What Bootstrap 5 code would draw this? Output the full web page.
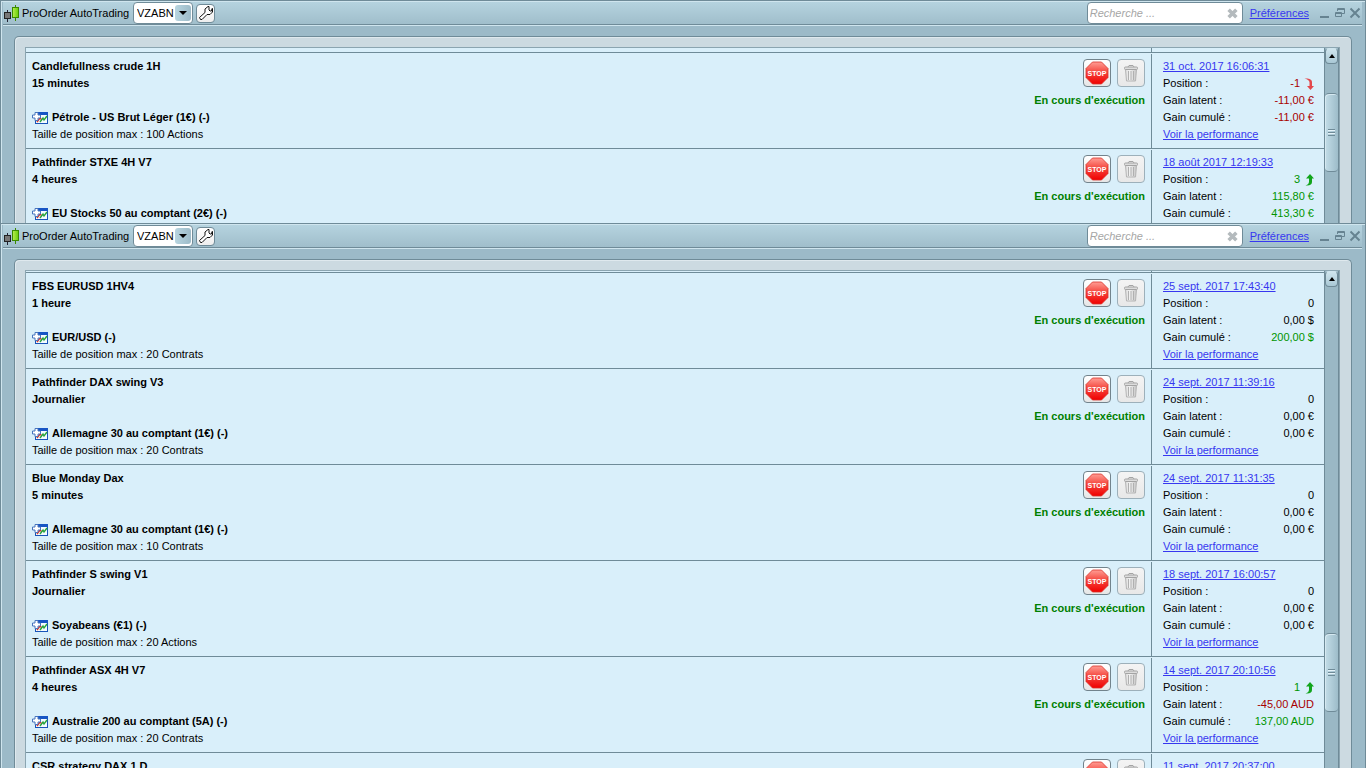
<!DOCTYPE html>
<html lang="fr">
<head>
<meta charset="utf-8">
<meta name="viewport" content="width=device-width, initial-scale=1">
<title>ProOrder AutoTrading</title>
<link href="https://cdn.jsdelivr.net/npm/bootstrap@5.3.0/dist/css/bootstrap.min.css" rel="stylesheet">
<style>
:root { --edge: #6f8b98; --chrome: #9cbac8; --panel: #ccdae1; --sheet: #d9effa; --blue: #3737f0; }
body { font: 11px/17px "Liberation Sans", Arial, sans-serif; color: #000; background: var(--chrome); }
a { color: var(--blue); }
.desktop { height: 100vh; display: grid; grid-template-rows: 223fr 545fr; }
.app-window { min-height: 0; background: var(--chrome); border: 1px solid var(--edge); border-bottom: 0; box-shadow: inset 1px 1px #cfe5ee; }
.title-bar { height: 24px; margin: 0 3px 0 2px; padding-top: 1px; background: linear-gradient(#cfe5ee 1px, #b5d3df 1px, #a0becb); border-bottom: 1px solid var(--edge); box-shadow: 0 1px #cfe5ee; }
.app-icon { width: 16px; height: 18px; margin: 0 2px 0 1px; }
.app-name { width: 111px; }
.field-box { height: 22px; background: #fff; border: 1px solid var(--edge); border-radius: 4px; }
.account { width: 60px; }
.account select { appearance: none; width: 100%; height: 20px; padding: 0 0 0 3px; border: 0; background: transparent; color: #000; font-size: 11px; }
.account span { top: 2px; right: 1px; width: 16px; height: 16px; border-radius: 3px; background: linear-gradient(90deg, #b8d5e0, #9dbbc8); }
.tool { width: 19px; height: 19px; background: linear-gradient(#fff, #eee); border: 1px solid var(--edge); border-radius: 4px; margin-left: 3px; }
.search { width: 156px; }
.search input { border: 0; background: transparent; padding: 0 0 0 2px; font-style: italic; font-size: 11px; color: #333; }
.search input::placeholder { color: #a6a6a6; opacity: 1; }
.prefs { margin: 0 8px 0 7px; }
.win-btn { width: 15px; height: 16px; color: #668391; }
.outer-panel { margin: 11px 13px 0; padding: 10px 11px 0 10px; background: var(--panel); border: 1px solid var(--edge); border-bottom: 0; border-radius: 5px 5px 0 0; box-shadow: inset 1px 1px #dfe9ee; }
.sheet { background: var(--sheet); border: 1px solid #8ba5b1; border-bottom: 0; }
.lead-4 { padding-top: 4px; }
.lead-1 { padding-top: 1px; }
.system { border-top: 1px solid var(--edge); }
.main-cell { padding: 5px 6px; }
.stats { width: 173px; margin-top: 1px; padding: 4px 10px 5px 11px; border-left: 1px solid var(--edge); }
.stub { width: 173px; border-left: 1px solid var(--edge); }
.lead-4 .stub { height: 4px; margin-top: -4px; }
.lead-1 .stub { height: 1px; margin-top: -1px; }
.instrument svg { width: 16px; height: 14px; margin-right: 4px; }
.actions { gap: 6px; margin: 1px 0 5px; }
.act { width: 28px; height: 28px; border: 1px solid #72838c; border-radius: 4px; background: linear-gradient(#fff, #f4f4f4 50%, #e6e6e6); }
.act:disabled { border-color: #9db0ba; background: linear-gradient(#f4f4f4, #e8e8e8); }
.running { color: #008000; }
.up { color: #009500; }
.down { color: #a80000; }
.trend { width: 10px; height: 12px; margin-left: 4px; }
.scroller { width: 15px; background: #9ab8c5; border-left: 1px solid var(--edge); border-right: 1px solid var(--edge); }
.scroll-up { height: 16px; border: 1px solid var(--edge); border-top-color: #cfe5ee; border-radius: 4px; background: linear-gradient(#cfe5ee, #a9c8d5); }
.thumb { height: 79px; border: 1px solid var(--edge); border-width: 1px 0; border-radius: 4px; background: linear-gradient(90deg, #c3dde8, #9dbcc9); box-shadow: inset 1px 1px #d6e9f1; }
</style>
</head>
<body class="overflow-hidden">

<svg class="position-absolute" width="0" height="0" aria-hidden="true">
  <defs>
    <linearGradient id="redFill" x1="0" y1="0" x2="0" y2="1"><stop offset="0" stop-color="#ff9d94"/><stop offset=".45" stop-color="#f54840"/><stop offset="1" stop-color="#f00000"/></linearGradient>
    <linearGradient id="greenFill" x1="0" x2="1"><stop offset="0" stop-color="#b9ee50"/><stop offset="1" stop-color="#67cc08"/></linearGradient>
    <linearGradient id="binFill" x1="0" x2="1"><stop offset="0" stop-color="#ddd"/><stop offset=".4" stop-color="#f2f2f2"/><stop offset="1" stop-color="#c4c4c4"/></linearGradient>
  </defs>
  <symbol id="candles" viewBox="0 0 16 18"><path d="M3.500 6v12" stroke="#223"/><path d="M11.500 1v16" stroke="#3b8a00"/><rect x=".5" y="8.500" width="6" height="6" fill="#777" stroke="#222"/><rect x="8.500" y="3.500" width="6" height="10" fill="url(#greenFill)" stroke="#3b8a00"/></symbol>
  <symbol id="wrench" viewBox="0 0 16 16"><path d="M1.500 12.500 7 7.500V4L10 1.500h1V5l1 1h1.500l.5-2.500h.5V7L12 9.500H9L4 14.500H2.500z" fill="#fff" stroke="#111" stroke-linejoin="round"/></symbol>
  <symbol id="clear" viewBox="0 0 10 10"><path d="M1.500 1.500l7 7M8.500 1.500l-7 7" stroke="#b4babd" stroke-width="3.200"/></symbol>
  <symbol id="caret" viewBox="0 0 8 4"><path d="M0 0h8L4 4z"/></symbol>
  <symbol id="caretUp" viewBox="0 0 8 4"><path d="M1 4h6L4 0z"/></symbol>
  <symbol id="minimize" viewBox="0 0 12 12"><path d="M1 10h9" stroke="currentColor" stroke-width="2"/></symbol>
  <symbol id="restore" viewBox="0 0 12 12"><path d="M3.500 4V1.500h7v5H8M3 2.500h8" fill="none" stroke="currentColor"/><path d="M1.500 5.500h6v4h-6zM1 6.500h7" fill="none" stroke="currentColor"/></symbol>
  <symbol id="close" viewBox="0 0 12 12"><path d="M1.500 1.500l9 9M10.500 1.500l-9 9" stroke="currentColor" stroke-width="2"/></symbol>
  <symbol id="stop" viewBox="0 0 24 24"><path d="M7.500 1h9L23 7.500v9L16.500 23h-9L1 16.500v-9z" fill="url(#redFill)" stroke="#d9332c" stroke-width=".8"/><text x="12" y="15" text-anchor="middle" font-family="Liberation Sans, sans-serif" font-size="7" font-weight="700" fill="#fff">STOP</text></symbol>
  <symbol id="bin" viewBox="0 0 16 18"><path d="M2.500 5.500h11L12.500 17h-9z" fill="url(#binFill)" stroke="#b4b4b4"/><path d="M5.500 7v9M8 7v9M10.500 7v9" stroke="#b0b0b0"/><rect x="1.500" y="3" width="13" height="2.500" rx="1" fill="#ddd" stroke="#a4a4a4"/><path d="M5 3 6 1.500h4L11 3" fill="none" stroke="#a4a4a4"/></symbol>
  <symbol id="chart" viewBox="0 0 16 14"><rect x="3.500" y="1.500" width="12" height="11" fill="#f5fbff" stroke="#1854b8"/><path d="M3 1h13v3H3z" fill="#1755c4"/><path d="m5 11 3-4 2 2" fill="none" stroke="#e03020" stroke-width="1.400"/><path d="m8 11 3-4 1 2 3-4" fill="none" stroke="#27a53b" stroke-width="1.400"/><path d="M3 1.500h3V4h2.500v3H6v2.500H3V7H.5V4H3z" fill="#fff" stroke="#4774bd"/></symbol>
  <symbol id="arrowUp" viewBox="0 0 10 12"><path d="M6 0l4 4.500H8V8c0 2.500-2 4-6.500 3.500C4 10.500 5 9.500 5 7.500v-3H2z" fill="#12a51c"/></symbol>
  <symbol id="arrowDown" viewBox="0 0 10 12"><path d="M6.500 12 10 8H8V4C8 1.500 5 0 .5.500 4 1.500 5.500 2.500 5.500 4.500V8H3z" fill="#e3484c"/></symbol>
</svg>

<main class="desktop">

  <section class="app-window d-flex flex-column overflow-hidden" aria-label="ProOrder AutoTrading 1">
    <header class="title-bar d-flex align-items-center flex-shrink-0">
      <svg class="app-icon"><use href="#candles"/></svg>
      <label class="app-name" for="account1">ProOrder AutoTrading</label>
      <div class="account field-box position-relative">
        <select id="account1"><option>VZABN</option></select>
        <span class="position-absolute d-flex align-items-center justify-content-center pe-none"><svg width="8" height="4"><use href="#caret"/></svg></span>
      </div>
      <button class="tool p-0 d-flex align-items-center justify-content-center" type="button" aria-label="Réglages"><svg width="16" height="16"><use href="#wrench"/></svg></button>
      <div class="search field-box d-flex align-items-center ms-auto pe-1">
        <input class="flex-grow-1 w-100" type="text" placeholder="Recherche ..." aria-label="Recherche">
        <svg class="flex-shrink-0" width="11" height="11"><use href="#clear"/></svg>
      </div>
      <a class="prefs" href="#">Préférences</a>
      <button class="win-btn border-0 bg-transparent p-0 d-flex align-items-center justify-content-center" type="button" aria-label="Réduire"><svg width="12" height="12"><use href="#minimize"/></svg></button>
      <button class="win-btn border-0 bg-transparent p-0 d-flex align-items-center justify-content-center" type="button" aria-label="Restaurer"><svg width="12" height="12"><use href="#restore"/></svg></button>
      <button class="win-btn border-0 bg-transparent p-0 d-flex align-items-center justify-content-center" type="button" aria-label="Fermer"><svg width="12" height="12"><use href="#close"/></svg></button>
    </header>
    <div class="outer-panel d-flex flex-grow-1 overflow-hidden">
      <div class="sheet d-flex flex-grow-1 overflow-hidden">
        <div class="flex-grow-1 lead-4">
          <div class="stub ms-auto"></div>
          <article class="system d-flex">
            <div class="main-cell d-flex flex-grow-1 justify-content-between">
              <div>
                <div class="fw-bold">Candlefullness crude 1H</div>
                <div class="fw-bold">15 minutes</div>
                <div>&nbsp;</div>
                <div class="instrument fw-bold d-flex align-items-center"><svg><use href="#chart"/></svg>Pétrole - US Brut Léger (1€) (-)</div>
                <div>Taille de position max : 100 Actions</div>
              </div>
              <div>
                <div class="actions d-flex justify-content-end">
                  <button class="act p-0 d-flex align-items-center justify-content-center" type="button" aria-label="Arrêter"><svg width="24" height="24"><use href="#stop"/></svg></button>
                  <button class="act p-0 d-flex align-items-center justify-content-center" type="button" aria-label="Supprimer" disabled><svg width="16" height="18"><use href="#bin"/></svg></button>
                </div>
                <div class="running fw-bold">En cours d'exécution</div>
              </div>
            </div>
            <div class="stats">
              <a href="#">31 oct. 2017 16:06:31</a>
              <div class="d-flex justify-content-between"><span>Position :</span><span class="down d-flex align-items-center">-1 <svg class="trend"><use href="#arrowDown"/></svg></span></div>
              <div class="d-flex justify-content-between"><span>Gain latent :</span><span class="down">-11,00 €</span></div>
              <div class="d-flex justify-content-between"><span>Gain cumulé :</span><span class="down">-11,00 €</span></div>
              <a href="#">Voir la performance</a>
            </div>
          </article>
          <article class="system d-flex">
            <div class="main-cell d-flex flex-grow-1 justify-content-between">
              <div>
                <div class="fw-bold">Pathfinder STXE 4H V7</div>
                <div class="fw-bold">4 heures</div>
                <div>&nbsp;</div>
                <div class="instrument fw-bold d-flex align-items-center"><svg><use href="#chart"/></svg>EU Stocks 50 au comptant (2€) (-)</div>
              </div>
              <div>
                <div class="actions d-flex justify-content-end">
                  <button class="act p-0 d-flex align-items-center justify-content-center" type="button" aria-label="Arrêter"><svg width="24" height="24"><use href="#stop"/></svg></button>
                  <button class="act p-0 d-flex align-items-center justify-content-center" type="button" aria-label="Supprimer" disabled><svg width="16" height="18"><use href="#bin"/></svg></button>
                </div>
                <div class="running fw-bold">En cours d'exécution</div>
              </div>
            </div>
            <div class="stats">
              <a href="#">18 août 2017 12:19:33</a>
              <div class="d-flex justify-content-between"><span>Position :</span><span class="up d-flex align-items-center">3 <svg class="trend"><use href="#arrowUp"/></svg></span></div>
              <div class="d-flex justify-content-between"><span>Gain latent :</span><span class="up">115,80 €</span></div>
              <div class="d-flex justify-content-between"><span>Gain cumulé :</span><span class="up">413,30 €</span></div>
            </div>
          </article>
        </div>
        <div class="scroller d-flex flex-column flex-shrink-0">
          <button class="scroll-up p-0 d-flex align-items-center justify-content-center" type="button" aria-label="Monter"><svg width="8" height="4"><use href="#caretUp"/></svg></button>
          <div class="d-flex flex-column flex-grow-1">
            <div style="flex: 0 0 18%"></div>
            <div class="thumb d-flex align-items-center justify-content-center flex-shrink-0"><svg width="7" height="7"><path d="M0 1.500h7M0 4.500h7M0 7.500h7" stroke="#e5f3f9"/><path d="M0 .5h7M0 3.500h7M0 6.500h7" stroke="#6f8b98"/></svg></div>
          </div>
        </div>
      </div>
    </div>
  </section>

  <section class="app-window d-flex flex-column overflow-hidden" aria-label="ProOrder AutoTrading 2">
    <header class="title-bar d-flex align-items-center flex-shrink-0">
      <svg class="app-icon"><use href="#candles"/></svg>
      <label class="app-name" for="account2">ProOrder AutoTrading</label>
      <div class="account field-box position-relative">
        <select id="account2"><option>VZABN</option></select>
        <span class="position-absolute d-flex align-items-center justify-content-center pe-none"><svg width="8" height="4"><use href="#caret"/></svg></span>
      </div>
      <button class="tool p-0 d-flex align-items-center justify-content-center" type="button" aria-label="Réglages"><svg width="16" height="16"><use href="#wrench"/></svg></button>
      <div class="search field-box d-flex align-items-center ms-auto pe-1">
        <input class="flex-grow-1 w-100" type="text" placeholder="Recherche ..." aria-label="Recherche">
        <svg class="flex-shrink-0" width="11" height="11"><use href="#clear"/></svg>
      </div>
      <a class="prefs" href="#">Préférences</a>
      <button class="win-btn border-0 bg-transparent p-0 d-flex align-items-center justify-content-center" type="button" aria-label="Réduire"><svg width="12" height="12"><use href="#minimize"/></svg></button>
      <button class="win-btn border-0 bg-transparent p-0 d-flex align-items-center justify-content-center" type="button" aria-label="Restaurer"><svg width="12" height="12"><use href="#restore"/></svg></button>
      <button class="win-btn border-0 bg-transparent p-0 d-flex align-items-center justify-content-center" type="button" aria-label="Fermer"><svg width="12" height="12"><use href="#close"/></svg></button>
    </header>
    <div class="outer-panel d-flex flex-grow-1 overflow-hidden">
      <div class="sheet d-flex flex-grow-1 overflow-hidden">
        <div class="flex-grow-1 lead-1">
          <div class="stub ms-auto"></div>
          <article class="system d-flex">
            <div class="main-cell d-flex flex-grow-1 justify-content-between">
              <div>
                <div class="fw-bold">FBS EURUSD 1HV4</div>
                <div class="fw-bold">1 heure</div>
                <div>&nbsp;</div>
                <div class="instrument fw-bold d-flex align-items-center"><svg><use href="#chart"/></svg>EUR/USD (-)</div>
                <div>Taille de position max : 20 Contrats</div>
              </div>
              <div>
                <div class="actions d-flex justify-content-end">
                  <button class="act p-0 d-flex align-items-center justify-content-center" type="button" aria-label="Arrêter"><svg width="24" height="24"><use href="#stop"/></svg></button>
                  <button class="act p-0 d-flex align-items-center justify-content-center" type="button" aria-label="Supprimer" disabled><svg width="16" height="18"><use href="#bin"/></svg></button>
                </div>
                <div class="running fw-bold">En cours d'exécution</div>
              </div>
            </div>
            <div class="stats">
              <a href="#">25 sept. 2017 17:43:40</a>
              <div class="d-flex justify-content-between"><span>Position :</span><span>0</span></div>
              <div class="d-flex justify-content-between"><span>Gain latent :</span><span>0,00 $</span></div>
              <div class="d-flex justify-content-between"><span>Gain cumulé :</span><span class="up">200,00 $</span></div>
              <a href="#">Voir la performance</a>
            </div>
          </article>
          <article class="system d-flex">
            <div class="main-cell d-flex flex-grow-1 justify-content-between">
              <div>
                <div class="fw-bold">Pathfinder DAX swing V3</div>
                <div class="fw-bold">Journalier</div>
                <div>&nbsp;</div>
                <div class="instrument fw-bold d-flex align-items-center"><svg><use href="#chart"/></svg>Allemagne 30 au comptant (1€) (-)</div>
                <div>Taille de position max : 20 Contrats</div>
              </div>
              <div>
                <div class="actions d-flex justify-content-end">
                  <button class="act p-0 d-flex align-items-center justify-content-center" type="button" aria-label="Arrêter"><svg width="24" height="24"><use href="#stop"/></svg></button>
                  <button class="act p-0 d-flex align-items-center justify-content-center" type="button" aria-label="Supprimer" disabled><svg width="16" height="18"><use href="#bin"/></svg></button>
                </div>
                <div class="running fw-bold">En cours d'exécution</div>
              </div>
            </div>
            <div class="stats">
              <a href="#">24 sept. 2017 11:39:16</a>
              <div class="d-flex justify-content-between"><span>Position :</span><span>0</span></div>
              <div class="d-flex justify-content-between"><span>Gain latent :</span><span>0,00 €</span></div>
              <div class="d-flex justify-content-between"><span>Gain cumulé :</span><span>0,00 €</span></div>
              <a href="#">Voir la performance</a>
            </div>
          </article>
          <article class="system d-flex">
            <div class="main-cell d-flex flex-grow-1 justify-content-between">
              <div>
                <div class="fw-bold">Blue Monday Dax</div>
                <div class="fw-bold">5 minutes</div>
                <div>&nbsp;</div>
                <div class="instrument fw-bold d-flex align-items-center"><svg><use href="#chart"/></svg>Allemagne 30 au comptant (1€) (-)</div>
                <div>Taille de position max : 10 Contrats</div>
              </div>
              <div>
                <div class="actions d-flex justify-content-end">
                  <button class="act p-0 d-flex align-items-center justify-content-center" type="button" aria-label="Arrêter"><svg width="24" height="24"><use href="#stop"/></svg></button>
                  <button class="act p-0 d-flex align-items-center justify-content-center" type="button" aria-label="Supprimer" disabled><svg width="16" height="18"><use href="#bin"/></svg></button>
                </div>
                <div class="running fw-bold">En cours d'exécution</div>
              </div>
            </div>
            <div class="stats">
              <a href="#">24 sept. 2017 11:31:35</a>
              <div class="d-flex justify-content-between"><span>Position :</span><span>0</span></div>
              <div class="d-flex justify-content-between"><span>Gain latent :</span><span>0,00 €</span></div>
              <div class="d-flex justify-content-between"><span>Gain cumulé :</span><span>0,00 €</span></div>
              <a href="#">Voir la performance</a>
            </div>
          </article>
          <article class="system d-flex">
            <div class="main-cell d-flex flex-grow-1 justify-content-between">
              <div>
                <div class="fw-bold">Pathfinder S swing V1</div>
                <div class="fw-bold">Journalier</div>
                <div>&nbsp;</div>
                <div class="instrument fw-bold d-flex align-items-center"><svg><use href="#chart"/></svg>Soyabeans (€1) (-)</div>
                <div>Taille de position max : 20 Actions</div>
              </div>
              <div>
                <div class="actions d-flex justify-content-end">
                  <button class="act p-0 d-flex align-items-center justify-content-center" type="button" aria-label="Arrêter"><svg width="24" height="24"><use href="#stop"/></svg></button>
                  <button class="act p-0 d-flex align-items-center justify-content-center" type="button" aria-label="Supprimer" disabled><svg width="16" height="18"><use href="#bin"/></svg></button>
                </div>
                <div class="running fw-bold">En cours d'exécution</div>
              </div>
            </div>
            <div class="stats">
              <a href="#">18 sept. 2017 16:00:57</a>
              <div class="d-flex justify-content-between"><span>Position :</span><span>0</span></div>
              <div class="d-flex justify-content-between"><span>Gain latent :</span><span>0,00 €</span></div>
              <div class="d-flex justify-content-between"><span>Gain cumulé :</span><span>0,00 €</span></div>
              <a href="#">Voir la performance</a>
            </div>
          </article>
          <article class="system d-flex">
            <div class="main-cell d-flex flex-grow-1 justify-content-between">
              <div>
                <div class="fw-bold">Pathfinder ASX 4H V7</div>
                <div class="fw-bold">4 heures</div>
                <div>&nbsp;</div>
                <div class="instrument fw-bold d-flex align-items-center"><svg><use href="#chart"/></svg>Australie 200 au comptant (5A) (-)</div>
                <div>Taille de position max : 20 Contrats</div>
              </div>
              <div>
                <div class="actions d-flex justify-content-end">
                  <button class="act p-0 d-flex align-items-center justify-content-center" type="button" aria-label="Arrêter"><svg width="24" height="24"><use href="#stop"/></svg></button>
                  <button class="act p-0 d-flex align-items-center justify-content-center" type="button" aria-label="Supprimer" disabled><svg width="16" height="18"><use href="#bin"/></svg></button>
                </div>
                <div class="running fw-bold">En cours d'exécution</div>
              </div>
            </div>
            <div class="stats">
              <a href="#">14 sept. 2017 20:10:56</a>
              <div class="d-flex justify-content-between"><span>Position :</span><span class="up d-flex align-items-center">1 <svg class="trend"><use href="#arrowUp"/></svg></span></div>
              <div class="d-flex justify-content-between"><span>Gain latent :</span><span class="down">-45,00 AUD</span></div>
              <div class="d-flex justify-content-between"><span>Gain cumulé :</span><span class="up">137,00 AUD</span></div>
              <a href="#">Voir la performance</a>
            </div>
          </article>
          <article class="system d-flex">
            <div class="main-cell d-flex flex-grow-1 justify-content-between">
              <div class="fw-bold">CSR strategy DAX 1 D</div>
              <div class="actions d-flex">
                <button class="act p-0 d-flex align-items-center justify-content-center" type="button" aria-label="Arrêter"><svg width="24" height="24"><use href="#stop"/></svg></button>
                <button class="act p-0 d-flex align-items-center justify-content-center" type="button" aria-label="Supprimer" disabled><svg width="16" height="18"><use href="#bin"/></svg></button>
              </div>
            </div>
            <div class="stats"><a href="#">11 sept. 2017 20:37:00</a></div>
          </article>
        </div>
        <div class="scroller d-flex flex-column flex-shrink-0">
          <button class="scroll-up p-0 d-flex align-items-center justify-content-center" type="button" aria-label="Monter"><svg width="8" height="4"><use href="#caretUp"/></svg></button>
          <div class="d-flex flex-column flex-grow-1">
            <div style="flex: 0 0 72%"></div>
            <div class="thumb d-flex align-items-center justify-content-center flex-shrink-0"><svg width="7" height="7"><path d="M0 1.500h7M0 4.500h7M0 7.500h7" stroke="#e5f3f9"/><path d="M0 .5h7M0 3.500h7M0 6.500h7" stroke="#6f8b98"/></svg></div>
          </div>
        </div>
      </div>
    </div>
  </section>

</main>
<script src="https://cdn.jsdelivr.net/npm/bootstrap@5.3.0/dist/js/bootstrap.bundle.min.js"></script>
</body>
</html>
